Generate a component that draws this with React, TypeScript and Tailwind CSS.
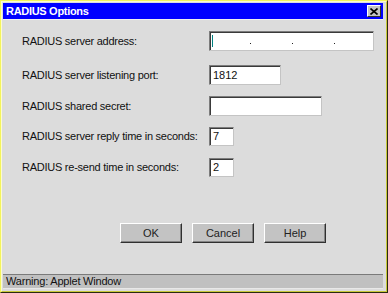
import React from "react";

const font = { fontFamily: '"Liberation Sans", Arial, sans-serif' };

function Field({ w, h = 20, value, ip }: { w: number; h?: number; value?: string; ip?: boolean }) {
  return (
    <div
      className="relative shrink-0 bg-white border border-t-[#7c7c7c] border-l-[#7c7c7c] border-b-[#c4c4c4] border-r-[#c4c4c4] shadow-[inset_1px_1px_0_#3a3a3a] text-[11px] text-[#111] flex items-center pl-[3px]"
      style={{ width: w, height: h }}
    >
      {value}
      {ip && (
        <>
          <div className="absolute left-[2px] top-[3px] w-[1px] h-[12px] bg-[#008080]" />
          <div className="absolute left-[40px] top-[11px] w-[1px] h-[1px] bg-[#222]" />
          <div className="absolute left-[82px] top-[11px] w-[1px] h-[1px] bg-[#222]" />
          <div className="absolute left-[124px] top-[11px] w-[1px] h-[1px] bg-[#222]" />
        </>
      )}
    </div>
  );
}

function Row({ label, children, mt }: { label: string; children: React.ReactNode; mt: number }) {
  return (
    <div className="flex items-center" style={{ marginTop: mt }}>
      <div className="w-[206px] shrink-0 pl-[19px] text-[11px] tracking-[-0.25px] text-[#111] whitespace-nowrap">{label}</div>
      {children}
    </div>
  );
}

function Btn({ label }: { label: string }) {
  return (
    <div className="w-[62px] h-[20px] bg-[#c3c3c3] border border-t-white border-l-white border-b-[#303030] border-r-[#303030] shadow-[inset_-1px_-1px_0_#858585] flex items-center justify-center text-[11px] text-[#222]">
      {label}
    </div>
  );
}

export default function App() {
  return (
    <div style={font} className="w-[388px] h-[293px] border border-t-[#f4f45a] border-l-[#f4f45a] border-b-[#2a2a10] border-r-[#2a2a10]">
      <div className="w-full h-full border border-t-[#fbfbd0] border-l-[#fbfbd0] border-b-[#c8c83a] border-r-[#c8c83a] bg-[#dcdcdc] p-[1px] pr-[3px] pb-[2px] flex flex-col">
        <div className="h-[16px] bg-[#0000ff] flex items-center justify-between pl-[3px] pr-[2px]">
          <span className="text-white font-bold text-[11px] tracking-[-0.3px]">RADIUS Options</span>
          <div className="w-[14px] h-[12px] bg-[#c3c3c3] border border-t-white border-l-white border-b-[#303030] border-r-[#303030] flex items-center justify-center">
            <svg width="8" height="7" viewBox="0 0 8 7">
              <path d="M0.5 0.5 L7.5 6.5 M7.5 0.5 L0.5 6.5" stroke="#000" strokeWidth="1.6" />
            </svg>
          </div>
        </div>
        <div className="flex-1 flex flex-col border-t border-t-[#f0f0f0]">
          <Row label="RADIUS server address:" mt={11}>
            <Field w={165} ip />
          </Row>
          <Row label="RADIUS server listening port:" mt={14}>
            <Field w={72} value="1812" />
          </Row>
          <Row label="RADIUS shared secret:" mt={11}>
            <Field w={113} />
          </Row>
          <Row label="RADIUS server reply time in seconds:" mt={11}>
            <Field w={25} h={19} value="7" />
          </Row>
          <Row label="RADIUS re-send time in seconds:" mt={12}>
            <Field w={25} h={19} value="2" />
          </Row>
          <div className="flex gap-[10px] mt-[46px] pl-[117px]">
            <Btn label="OK" />
            <Btn label="Cancel" />
            <Btn label="Help" />
          </div>
        </div>
        <div className="h-[15px] border-t border-t-[#7a7a7a] bg-[#c0c0c0] text-[11px] tracking-[-0.2px] text-[#111] pl-[3px] flex items-center border-b border-b-[#e8e8e8]">
          Warning: Applet Window
        </div>
      </div>
    </div>
  );
}
